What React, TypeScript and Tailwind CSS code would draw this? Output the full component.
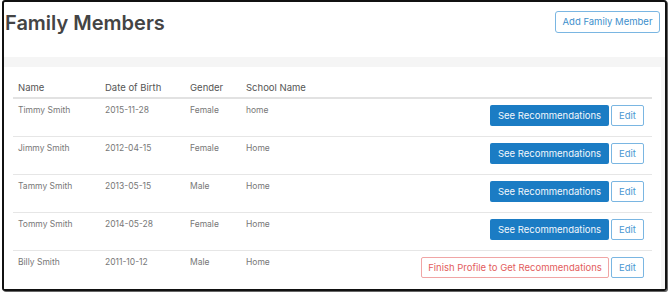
import React from 'react';

// --- Data for the rows ---
const members = [
  { name: 'Timmy Smith', dob: '2015-11-28', gender: 'Female', school: 'home', complete: true },
  { name: 'Jimmy Smith', dob: '2012-04-15', gender: 'Female', school: 'Home', complete: true },
  { name: 'Tammy Smith', dob: '2013-05-15', gender: 'Male', school: 'Home', complete: true },
  { name: 'Tommy Smith', dob: '2014-05-28', gender: 'Female', school: 'Home', complete: true },
  { name: 'Billy Smith', dob: '2011-10-12', gender: 'Male', school: 'Home', complete: false },
];

const font = { fontFamily: 'Inter, "Open Sans", sans-serif' };

const App: React.FC = () => {
  return (
    <div className="w-[670px] h-[295px] bg-white pl-[2px]" style={font}>
      <div className="w-[665px] h-[291px] border-2 border-[#111] rounded-[3px] shadow-[1px_1px_0_#666] flex flex-col overflow-hidden">
        {/* Header */}
        <div className="h-[55px] flex justify-between items-start shrink-0">
          <h1 className="text-[20px] font-semibold text-[#444] leading-none pt-[11px] pl-[1px]">
            Family Members
          </h1>
          <button className="mt-[9px] mr-[5px] h-[22px] w-[105px] border border-[#7ab6e2] rounded-[3px] text-[9.5px] text-[#3d8fcc] bg-white">
            Add Family Member
          </button>
        </div>

        {/* Table area */}
        <div className="flex-1 bg-[#f5f5f5] pt-[10px] pr-[4px] flex">
          <div className="flex-1 bg-white px-[9px] pt-[13px]">
            <div className="flex items-end h-[19px] pb-[5px] border-b-2 border-[#e2e2e2] text-[9.5px] text-[#555] leading-none">
              <div className="w-[87px] pl-[5px]">Name</div>
              <div className="w-[85px] pl-[5px]">Date of Birth</div>
              <div className="w-[56px] pl-[5px]">Gender</div>
              <div className="flex-1 pl-[5px]">School Name</div>
            </div>
            {members.map((m, i) => (
              <div
                key={i}
                className={`flex items-start h-[38px] pt-[6px] text-[8.5px] text-[#777] leading-[10px] ${
                  i < members.length - 1 ? 'border-b border-[#e6e6e6]' : ''
                }`}
              >
                <div className="w-[87px] pl-[5px]">{m.name}</div>
                <div className="w-[85px] pl-[5px]">{m.dob}</div>
                <div className="w-[56px] pl-[5px]">{m.gender}</div>
                <div className="flex-1 pl-[5px]">{m.school}</div>
                <div className="flex gap-[2px] pr-[8px]">
                  {m.complete ? (
                    <button className="h-[21px] w-[119px] rounded-[2px] bg-[#1b7cc4] text-[#f2f7fc] text-[9.5px]">
                      See Recommendations
                    </button>
                  ) : (
                    <button className="h-[21px] w-[188px] rounded-[2px] border border-[#f0a5a5] text-[#e35d5d] bg-white text-[9.5px]">
                      Finish Profile to Get Recommendations
                    </button>
                  )}
                  <button className="h-[21px] w-[33px] rounded-[2px] border border-[#7ab6e2] text-[#4a98d3] bg-white text-[9.5px]">
                    Edit
                  </button>
                </div>
              </div>
            ))}
          </div>
        </div>
      </div>
    </div>
  );
};

export default App;
